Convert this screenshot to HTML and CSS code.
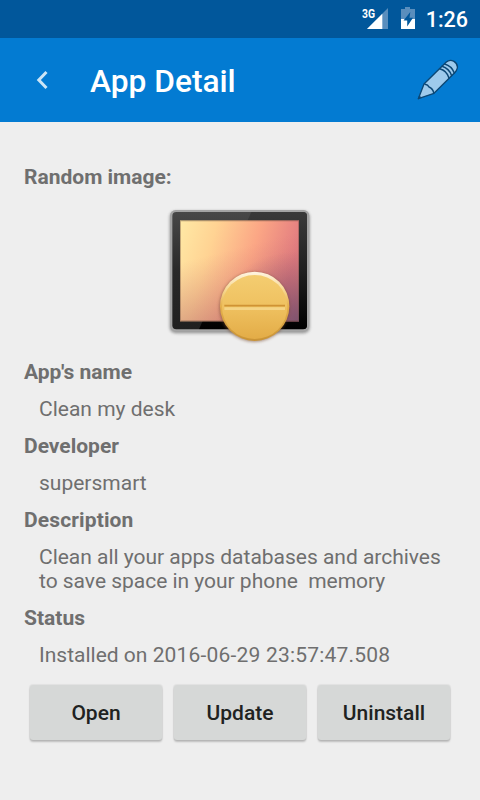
FILE: index.html
```html
<!DOCTYPE html>
<html lang="en">
<head>
<meta charset="utf-8">
<title>App Detail</title>
<link rel="stylesheet" href="styles.css">
</head>
<body>
<div class="status-bar">
  <svg class="signal" width="30" height="38" viewBox="0 0 30 38">
    <path d="M27 8V29H6z" fill="#5a8ebd"/>
    <path d="M21.3 13.7V29H6z" fill="#fff"/>
    <text x="1" y="17.5" textLength="13" lengthAdjust="spacingAndGlyphs">3G</text>
  </svg>
  <svg class="battery" width="16" height="38" viewBox="0 0 16 38">
    <path d="M5 7h5v2h5v10H1V9h4z" fill="#5a8ebd"/>
    <path d="M1 19h14v10H1z" fill="#fff"/>
    <path d="M10.3 12 3.5 20.500h3.700v6L13 17.800H9.500z" fill="#01579b"/>
  </svg>
  <span class="clock">1:26</span>
</div>
<header class="toolbar">
  <svg class="back" width="12" height="20" viewBox="0 0 12 20"><path d="M10.500 2 2.800 10l7.700 8" fill="none" stroke="#cce5f6" stroke-width="3"/></svg>
  <h1>App Detail</h1>
  <svg class="edit" width="42" height="42" viewBox="51 42 126 126">
    <g stroke="#0b4775" stroke-width="4" stroke-linejoin="round" stroke-linecap="round">
      <path d="M55 161 72 117 139 51Q149 42 162 49Q174 57 172 69Q171 76 164 83L102 145z" fill="#9dcaec"/>
      <path d="M75 118Q84 119 87 126Q98 130 101 143M119 71Q140 76 147 99M126 64Q147 70 155 92M134 57Q155 63 163 84" fill="none" stroke-width="4.500"/>
      <path d="M55 161 58 153 63 157z" fill="#0b4775" stroke-width="2"/>
    </g>
  </svg>
</header>
<main>
  <h2>Random image:</h2>
  <svg class="picture" width="160" height="150" viewBox="0 0 480 450">
    <defs>
      <linearGradient id="frame" x1="0" y1="0" x2="0" y2="1"><stop offset="0" stop-color="#484848"/><stop offset=".5" stop-color="#292929"/><stop offset="1" stop-color="#202020"/></linearGradient>
      <linearGradient id="frameDark" x1="0" y1="0" x2="0" y2="1"><stop offset="0" stop-color="#3a3a3a"/><stop offset=".5" stop-color="#202020"/><stop offset="1" stop-color="#000"/></linearGradient>
      <linearGradient id="sky" x1="0" y1="0" x2="1" y2=".25"><stop offset="0" stop-color="#ffe9a5"/><stop offset=".3" stop-color="#ffd393"/><stop offset=".65" stop-color="#fba685"/><stop offset="1" stop-color="#e27b80"/></linearGradient>
      <linearGradient id="dusk" x1=".3" y1="0" x2=".6" y2="1"><stop offset=".3" stop-color="#c4706e" stop-opacity="0"/><stop offset="1" stop-color="#a85c66" stop-opacity=".5"/></linearGradient>
      <radialGradient id="corner" cx="1" cy="1" r=".7"><stop offset="0" stop-color="#76506f" stop-opacity=".9"/><stop offset="1" stop-color="#96586f" stop-opacity="0"/></radialGradient>
      <linearGradient id="gold" x1="0" y1="0" x2="0" y2="1"><stop offset="0" stop-color="#f4cd70"/><stop offset=".5" stop-color="#efc160"/><stop offset="1" stop-color="#e3ac47"/></linearGradient>
      <linearGradient id="rim" x1="0" y1="0" x2="0" y2="1"><stop offset="0" stop-color="#fff5e2"/><stop offset=".28" stop-color="#f6d68c"/><stop offset=".5" stop-color="#e5b04c"/><stop offset="1" stop-color="#c99335"/></linearGradient>
      <filter id="soft" x="-10%" y="-10%" width="120%" height="120%"><feGaussianBlur stdDeviation="4"/></filter>
      <clipPath id="shell"><rect x="37" y="36" width="404" height="352" rx="12"/></clipPath>
    </defs>
    <rect x="29" y="33" width="420" height="367" rx="18" fill="#666" opacity=".65" filter="url(#soft)"/>
    <rect x="30" y="30" width="418" height="364" rx="17" fill="#a4a4a4"/>
    <rect x="37" y="36" width="404" height="352" rx="12" fill="url(#frame)"/>
    <path d="M274 36H441V388H117z" fill="url(#frameDark)" clip-path="url(#shell)"/>
    <rect x="60" y="61" width="357" height="303" fill="url(#sky)"/>
    <rect x="60" y="61" width="357" height="303" fill="url(#dusk)"/>
    <rect x="60" y="61" width="357" height="303" fill="url(#corner)"/>
    <rect x="61.500" y="62.500" width="354" height="300" fill="none" stroke="#6a4c3c" stroke-opacity=".4" stroke-width="3"/>
    <circle cx="283" cy="321" r="105" fill="#71452c" opacity=".55" filter="url(#soft)"/>
    <circle cx="284" cy="319" r="104" fill="url(#rim)"/>
    <ellipse cx="284" cy="321" rx="98" ry="96" fill="url(#gold)"/>
    <path d="M193 317H375" stroke="#d09334" stroke-width="5"/>
    <path d="M193 326H375" stroke="#f5d486" stroke-width="8"/>
  </svg>
  <h2>App's name</h2>
  <p>Clean my desk</p>
  <h2>Developer</h2>
  <p>supersmart</p>
  <h2 class="wide">Description</h2>
  <p class="description">Clean all your apps databases and archives
to save space in your phone  memory</p>
  <h2>Status</h2>
  <p>Installed on <span class="date">2016-06-29 23:57:47.508</span></p>
  <div class="actions">
    <button>Open</button>
    <button>Update</button>
    <button>Uninstall</button>
  </div>
</main>
</body>
</html>
```
FILE: styles.css
```css
* { box-sizing: border-box; }
body {
  margin: 0;
  height: 800px;
  overflow: hidden;
  background: #eee;
  color: #6f6f6f;
  font-family: Roboto, "Liberation Sans", sans-serif;
}
.status-bar {
  display: flex;
  justify-content: flex-end;
  height: 38px;
  padding-right: 12px;
  background: #01579b;
  color: #fff;
}
.signal { margin-right: 9px; }
.signal text { font: bold 12.500px Roboto, sans-serif; fill: #fff; }
.battery { margin-right: 10px; }
.clock { font-size: 21.500px; font-weight: 500; line-height: 39px; }
.toolbar {
  display: flex;
  align-items: center;
  height: 84px;
  padding: 0 21px 0 35px;
  background: #037bd2;
}
.back { margin: -1px -1px 0 1px; }
.toolbar h1 {
  flex: 1;
  margin: 3px 0 0 43px;
  color: #fff;
  font-size: 31.700px;
  line-height: 38px;
  font-weight: 500;
}
main { padding: 43px 24px 0; }
h2, p {
  margin: 0 0 13px;
  font-size: 21px;
  line-height: 24px;
}
h2 { font-weight: 700; }
.wide { letter-spacing: .13px; }
p {
  padding-left: 15px;
  font-weight: 400;
  white-space: pre;
}
.description { letter-spacing: -.02px; }
.date { letter-spacing: .19px; }
.picture { display: block; margin: -2px auto 10px; }
.actions {
  display: flex;
  gap: 12px;
  margin-top: 18px;
  padding: 0 6px;
}
button {
  flex: 1 1 0;
  height: 55px;
  padding: 1px 0 0;
  border: 0;
  border-radius: 3px;
  background: #d6d8d7;
  box-shadow: 0 0 1px 1px rgba(0, 0, 0, .055), 0 2px 2px rgba(0, 0, 0, .2);
  color: #202221;
  font: 500 21px Roboto, sans-serif;
}
```
